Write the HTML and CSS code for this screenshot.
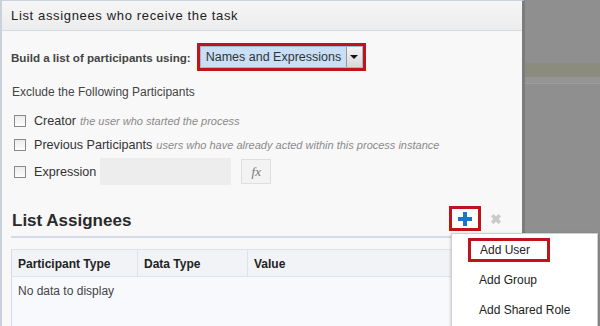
FILE: index.html
```html
<!DOCTYPE html>
<html lang="en">
<head>
    <meta charset="UTF-8">
    <title>List assignees</title>
    <link rel="stylesheet" href="styles.css">
</head>
<body>

    <div class="dialog">
        <div class="dialog-title">List assignees who receive the task</div>

        <div class="dialog-body">
            <div class="build-row">
                <label class="build-label">Build a list of participants using:</label>
                <div class="select-wrap">
                    <div class="select">
                        <span class="select-text">Names and Expressions</span>
                        <span class="select-btn"><span class="caret"></span></span>
                    </div>
                </div>
            </div>

            <p class="exclude">Exclude the Following Participants</p>

            <div class="checks">
                <div class="check-row">
                    <span class="check"></span>
                    <span class="check-label">Creator</span>
                    <span class="hint">the user who started the process</span>
                </div>
                <div class="check-row">
                    <span class="check"></span>
                    <span class="check-label">Previous Participants</span>
                    <span class="hint">users who have already acted within this process instance</span>
                </div>
                <div class="check-row expr-row">
                    <span class="check"></span>
                    <span class="check-label">Expression</span>
                    <span class="expr-input"></span>
                    <span class="fx-btn">fx</span>
                </div>
            </div>

            <div class="assignees-head">
                <h2>List Assignees</h2>
                <div class="tools">
                    <span class="add-btn">
                        <svg width="16" height="16" viewBox="0 0 16 16"><path d="M6 1h4v5h5v4h-5v5H6v-5H1V6h5z" fill="#1a74c9"/></svg>
                    </span>
                    <span class="del-btn">
                        <svg width="14" height="14" viewBox="0 0 14 14"><path d="M2 4.5L4.5 2 7 4.5 9.5 2 12 4.5 9.5 7 12 9.5 9.5 12 7 9.5 4.5 12 2 9.5 4.5 7z" fill="#c9c9c9"/></svg>
                    </span>
                </div>
            </div>

            <table class="grid">
                <thead>
                    <tr>
                        <th class="col-type">Participant Type</th>
                        <th class="col-data">Data Type</th>
                        <th>Value</th>
                    </tr>
                </thead>
                <tbody>
                    <tr>
                        <td colspan="3">No data to display</td>
                    </tr>
                </tbody>
            </table>
        </div>
    </div>

    <ul class="menu">
        <li class="menu-item selected">Add User</li>
        <li class="menu-item">Add Group</li>
        <li class="menu-item">Add Shared Role</li>
    </ul>

</body>
</html>
```

FILE: styles.css
```css
* {
    box-sizing: border-box;
}

body {
    margin: 0;
    height: 326px;
    overflow: hidden;
    font-family: "Liberation Sans", Arial, sans-serif;
    color: #333;
    background:
        linear-gradient(to bottom, transparent 63px, #8c8c7e 63px, #8c8c7e 77px, #959595 77px, #959595 83px, #9d9d9d 83px, #9d9d9d 84px, transparent 84px),
        #8f8f8f;
    position: relative;
}

.dialog {
    width: 525px;
    height: 326px;
    background: #f8f8f8;
    border-left: 2px solid #c9d2dc;
    border-top: 1px solid #c9d2dc;
    border-right: 3px solid #7c7c7c;
}

.dialog-title {
    height: 30px;
    padding: 7px 0 0 9px;
    font-size: 13px;
    letter-spacing: 0.65px;
    color: #222;
    background: linear-gradient(#f6f6f6, #ececec);
    border-bottom: 1px solid #d3dbe3;
}

.dialog-body {
    padding: 12px 0 0 9px;
}

.build-row {
    display: flex;
    align-items: center;
    gap: 6px;
}

.build-label {
    font-size: 11.6px;
    font-weight: bold;
    color: #444;
}

.select-wrap {
    border: 3px solid #c0141c;
}

.select {
    display: flex;
    width: 163px;
    height: 22px;
    background: #c9dff5;
    border: 1px solid #9fb7d0;
}

.select-text {
    flex: 1;
    font-size: 12.5px;
    padding: 3px 0 0 5px;
    color: #333;
}

.select-btn {
    width: 16px;
    border-left: 1px solid #9a9a9a;
    background: linear-gradient(#f4f4f4, #d8d8d8);
    display: flex;
    align-items: center;
    justify-content: center;
}

.caret {
    width: 0;
    height: 0;
    border-left: 4px solid transparent;
    border-right: 4px solid transparent;
    border-top: 4px solid #111;
}

.exclude {
    margin: 14px 0 0 1px;
    font-size: 12px;
    color: #444;
}

.checks {
    margin-top: 10px;
}

.check-row {
    display: flex;
    align-items: center;
    height: 24px;
    padding-left: 3px;
}

.check {
    width: 12px;
    height: 12px;
    border: 1px solid #8a8a8a;
    background: linear-gradient(#ececec, #fdfdfd);
    margin-right: 8px;
}

.check-label {
    font-size: 12.6px;
    color: #333;
}

.hint {
    font-size: 11px;
    font-style: italic;
    color: #8a8a8a;
    margin-left: 4px;
}

.expr-row {
    height: 29px;
}

.expr-input {
    width: 131px;
    height: 27px;
    background: #ededed;
    margin-left: 4px;
}

.fx-btn {
    width: 30px;
    height: 25px;
    margin-left: 10px;
    border: 1px solid #dedede;
    background: #f3f3f3;
    font-family: "Liberation Serif", serif;
    font-style: italic;
    font-size: 13px;
    color: #777;
    display: flex;
    align-items: center;
    justify-content: center;
}

.assignees-head {
    display: flex;
    align-items: flex-end;
    justify-content: space-between;
    margin-top: 20px;
    width: 505px;
    padding-bottom: 5px;
    border-bottom: 2px solid #d4dbe4;
}

.assignees-head h2 {
    margin: 0 0 0 1px;
    font-size: 17px;
    color: #2a2a2a;
}

.tools {
    display: flex;
    align-items: center;
    gap: 8px;
    margin-right: 13px;
}

.add-btn {
    width: 32px;
    height: 25px;
    border: 3px solid #c0141c;
    display: flex;
    align-items: center;
    justify-content: center;
    background: #fff;
}

.del-btn {
    display: flex;
}

.grid {
    margin-top: 11px;
    width: 516px;
    border-collapse: collapse;
    background: #f7f9fc;
    border-left: 1px solid #d4dbe4;
    font-size: 12px;
}

.grid th {
    text-align: left;
    font-size: 12px;
    font-weight: bold;
    color: #222;
    height: 27px;
    padding: 2px 6px 0 6px;
    background: #f1f3f7;
    border-top: 1px solid #dde3ea;
    border-bottom: 1px solid #dde3ea;
    border-right: 1px solid #dde3ea;
}

.col-type {
    width: 126px;
}

.col-data {
    width: 110px;
}

.grid td {
    padding: 7px 6px 40px 6px;
    color: #444;
}

.menu {
    position: absolute;
    left: 451px;
    top: 233px;
    width: 147px;
    height: 100px;
    margin: 0;
    padding: 4px 0 0 16px;
    list-style: none;
    background: #fff;
    border: 1px solid #d0d0d0;
    box-shadow: 0 1px 3px rgba(0, 0, 0, 0.25);
}

.menu-item {
    font-size: 12px;
    color: #222;
    height: 30px;
    line-height: 24px;
    padding-left: 11px;
}

.menu-item.selected {
    width: 82px;
    height: 24px;
    line-height: 18px;
    border: 3px solid #c0141c;
    padding-left: 9px;
    margin-bottom: 6px;
}
```
